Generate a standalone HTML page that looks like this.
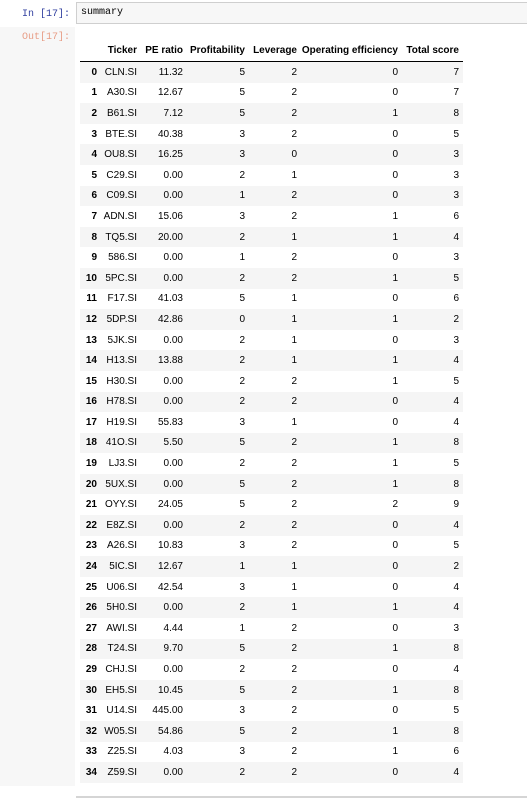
<!DOCTYPE html>
<html><head><style>
body{margin:0;width:527px;height:798px;background:#fff;position:relative;overflow:hidden;font-family:"Liberation Sans",Arial,sans-serif;}
.lg{position:absolute;left:0;top:27px;width:75px;height:759px;background:#f7f7f7;}
.inp{position:absolute;left:76px;top:2px;width:460px;height:22px;border:1px solid #cfcfcf;background:#f7f7f7;box-sizing:border-box;}
.inp span{position:absolute;left:4px;top:4px;font:10px "Liberation Mono",monospace;color:#000;}
.pin{position:absolute;left:22px;top:9px;font:10px "Liberation Mono",monospace;color:#303f9f;}
.pout{position:absolute;left:22px;top:32px;font:10px "Liberation Mono",monospace;color:#d84315;opacity:.5;}
.bl{position:absolute;left:76px;top:796px;width:451px;height:2px;background:#d5d5d5;}
table{position:absolute;left:80px;top:40px;border-collapse:collapse;table-layout:fixed;font-size:10px;color:#000;}
td,th{padding:0 4px 0 0;text-align:right;height:20.6px;white-space:nowrap;}
th{font-weight:bold;}
thead th{height:21px;border-bottom:1px solid #000;vertical-align:middle;}
tbody tr:nth-child(odd){background:#f5f5f5;}
</style></head><body>
<div class="lg"></div>
<div class="pin">In [17]:</div>
<div class="inp"><span>summary</span></div>
<div class="pout">Out[17]:</div>
<table>
<colgroup><col style="width:21px"><col style="width:40px"><col style="width:46px"><col style="width:62px"><col style="width:52px"><col style="width:101px"><col style="width:61px"></colgroup>
<thead><tr><th></th><th>Ticker</th><th>PE ratio</th><th>Profitability</th><th>Leverage</th><th>Operating efficiency</th><th>Total score</th></tr></thead>
<tbody>
<tr><th>0</th><td>CLN.SI</td><td>11.32</td><td>5</td><td>2</td><td>0</td><td>7</td></tr>
<tr><th>1</th><td>A30.SI</td><td>12.67</td><td>5</td><td>2</td><td>0</td><td>7</td></tr>
<tr><th>2</th><td>B61.SI</td><td>7.12</td><td>5</td><td>2</td><td>1</td><td>8</td></tr>
<tr><th>3</th><td>BTE.SI</td><td>40.38</td><td>3</td><td>2</td><td>0</td><td>5</td></tr>
<tr><th>4</th><td>OU8.SI</td><td>16.25</td><td>3</td><td>0</td><td>0</td><td>3</td></tr>
<tr><th>5</th><td>C29.SI</td><td>0.00</td><td>2</td><td>1</td><td>0</td><td>3</td></tr>
<tr><th>6</th><td>C09.SI</td><td>0.00</td><td>1</td><td>2</td><td>0</td><td>3</td></tr>
<tr><th>7</th><td>ADN.SI</td><td>15.06</td><td>3</td><td>2</td><td>1</td><td>6</td></tr>
<tr><th>8</th><td>TQ5.SI</td><td>20.00</td><td>2</td><td>1</td><td>1</td><td>4</td></tr>
<tr><th>9</th><td>586.SI</td><td>0.00</td><td>1</td><td>2</td><td>0</td><td>3</td></tr>
<tr><th>10</th><td>5PC.SI</td><td>0.00</td><td>2</td><td>2</td><td>1</td><td>5</td></tr>
<tr><th>11</th><td>F17.SI</td><td>41.03</td><td>5</td><td>1</td><td>0</td><td>6</td></tr>
<tr><th>12</th><td>5DP.SI</td><td>42.86</td><td>0</td><td>1</td><td>1</td><td>2</td></tr>
<tr><th>13</th><td>5JK.SI</td><td>0.00</td><td>2</td><td>1</td><td>0</td><td>3</td></tr>
<tr><th>14</th><td>H13.SI</td><td>13.88</td><td>2</td><td>1</td><td>1</td><td>4</td></tr>
<tr><th>15</th><td>H30.SI</td><td>0.00</td><td>2</td><td>2</td><td>1</td><td>5</td></tr>
<tr><th>16</th><td>H78.SI</td><td>0.00</td><td>2</td><td>2</td><td>0</td><td>4</td></tr>
<tr><th>17</th><td>H19.SI</td><td>55.83</td><td>3</td><td>1</td><td>0</td><td>4</td></tr>
<tr><th>18</th><td>41O.SI</td><td>5.50</td><td>5</td><td>2</td><td>1</td><td>8</td></tr>
<tr><th>19</th><td>LJ3.SI</td><td>0.00</td><td>2</td><td>2</td><td>1</td><td>5</td></tr>
<tr><th>20</th><td>5UX.SI</td><td>0.00</td><td>5</td><td>2</td><td>1</td><td>8</td></tr>
<tr><th>21</th><td>OYY.SI</td><td>24.05</td><td>5</td><td>2</td><td>2</td><td>9</td></tr>
<tr><th>22</th><td>E8Z.SI</td><td>0.00</td><td>2</td><td>2</td><td>0</td><td>4</td></tr>
<tr><th>23</th><td>A26.SI</td><td>10.83</td><td>3</td><td>2</td><td>0</td><td>5</td></tr>
<tr><th>24</th><td>5IC.SI</td><td>12.67</td><td>1</td><td>1</td><td>0</td><td>2</td></tr>
<tr><th>25</th><td>U06.SI</td><td>42.54</td><td>3</td><td>1</td><td>0</td><td>4</td></tr>
<tr><th>26</th><td>5H0.SI</td><td>0.00</td><td>2</td><td>1</td><td>1</td><td>4</td></tr>
<tr><th>27</th><td>AWI.SI</td><td>4.44</td><td>1</td><td>2</td><td>0</td><td>3</td></tr>
<tr><th>28</th><td>T24.SI</td><td>9.70</td><td>5</td><td>2</td><td>1</td><td>8</td></tr>
<tr><th>29</th><td>CHJ.SI</td><td>0.00</td><td>2</td><td>2</td><td>0</td><td>4</td></tr>
<tr><th>30</th><td>EH5.SI</td><td>10.45</td><td>5</td><td>2</td><td>1</td><td>8</td></tr>
<tr><th>31</th><td>U14.SI</td><td>445.00</td><td>3</td><td>2</td><td>0</td><td>5</td></tr>
<tr><th>32</th><td>W05.SI</td><td>54.86</td><td>5</td><td>2</td><td>1</td><td>8</td></tr>
<tr><th>33</th><td>Z25.SI</td><td>4.03</td><td>3</td><td>2</td><td>1</td><td>6</td></tr>
<tr><th>34</th><td>Z59.SI</td><td>0.00</td><td>2</td><td>2</td><td>0</td><td>4</td></tr>
</tbody></table>
<div class="bl"></div>
</body></html>
